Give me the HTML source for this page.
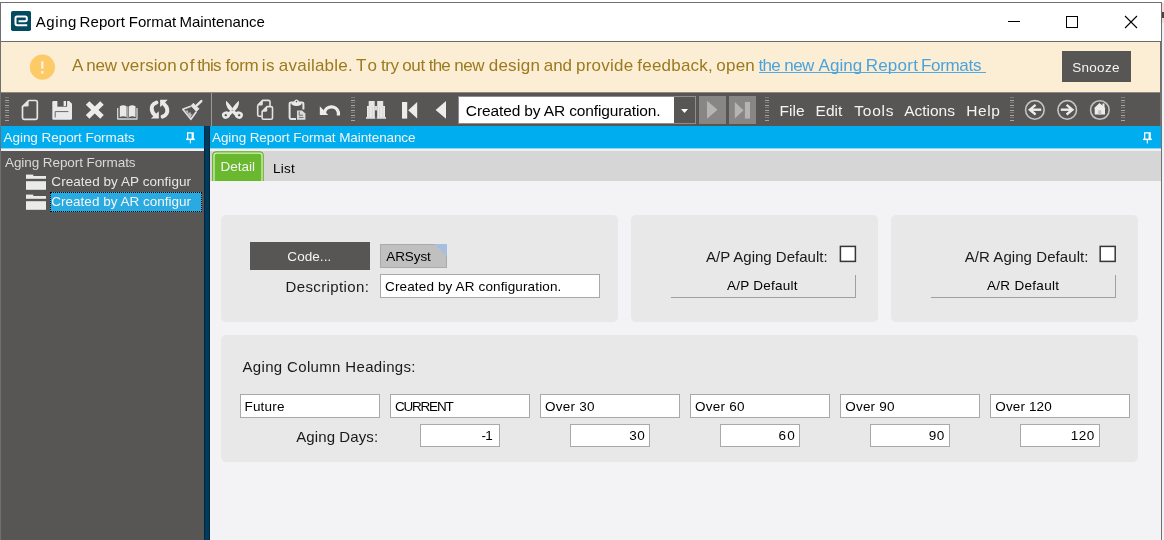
<!DOCTYPE html>
<html>
<head>
<meta charset="utf-8">
<title>Aging Report Format Maintenance</title>
<style>
*{box-sizing:border-box;margin:0;padding:0}
html,body{width:1164px;height:540px;overflow:hidden;background:#fff}
body{font-family:"Liberation Sans",sans-serif;font-size:13.5px;color:#000;position:relative}
#root{position:absolute;left:0;top:0;width:1164px;height:540px;will-change:transform;overflow:hidden}
.abs{position:absolute}
#win{position:absolute;left:0;top:2px;width:1162px;height:538px;border:1px solid #707070;border-bottom:none;background:#fff}
#deskR{position:absolute;left:1162px;top:3px;width:2px;height:537px;background:#eef2f8}
#tsep{position:absolute;left:1px;top:41px;width:1160px;height:1px;background:#6b6b6b}
#banner{position:absolute;left:1px;top:42px;width:1159px;height:50px;background:#fcedd5}
#snooze{position:absolute;left:1062px;top:51px;width:69px;height:31px;background:#575654}
#toolbar{position:absolute;left:1px;top:92px;width:1159px;height:34px;background:#575654}
.grip{position:absolute;top:97px;width:4px;height:25px;background:repeating-linear-gradient(to bottom,#7d7c7a 0,#7d7c7a 1.5px,transparent 1.5px,transparent 2.6px,#a6a5a3 2.6px,#a6a5a3 3.8px,transparent 3.8px,transparent 5px)}
#sidebar{position:absolute;left:1px;top:126px;width:203px;height:414px;background:#575654}
#sidehead{position:absolute;left:1px;top:126px;width:203px;height:22px;background:#00aeef}
#splitter{position:absolute;left:204px;top:126px;width:6px;height:414px;background:#003a5d;border-left:1px solid #05253b;border-right:1px solid #0a2437}
#mainhead{position:absolute;left:210px;top:126px;width:951px;height:22px;background:#00aeef}
#tabstrip{position:absolute;left:210px;top:151px;width:951px;height:30px;background:#d6d6d6}
.lightline{position:absolute;top:148px;height:3px;background:linear-gradient(to bottom,#8fd7f5 0,#8fd7f5 1px,#f4efef 1px,#f4efef 3px)}
#content{position:absolute;left:210px;top:181px;width:951px;height:359px;background:#f3f3f5}
.panel{position:absolute;background:#e8e8e8;border-radius:5px}
.field{position:absolute;background:#fff;border:1px solid #a9a9a9}
.flatbtn{position:absolute;border-right:1px solid #a0a0a0;border-bottom:1px solid #a0a0a0}
.t{position:absolute;line-height:20px;white-space:pre}
</style>
</head>
<body><div id="root">
<div id="deskR"></div>
<div class="abs" style="left:1162px;top:3px;width:2px;height:20px;background:#fbd6d6"></div>
<div class="abs" style="left:1162px;top:12px;width:2px;height:6px;background:#4a4242"></div>
<div id="win"></div>
<div id="tsep"></div>
<div id="banner"></div>
<div class="abs" style="left:758.8px;top:72px;width:227px;height:1px;background:#55a7dd"></div>
<div id="snooze"></div>
<div id="toolbar"></div>
<div class="abs" style="left:1160px;top:42px;width:1px;height:84px;background:#707070"></div>
<div class="abs" style="left:1px;top:92px;width:1159px;height:1px;background:#8d8883"></div>
<div id="sidebar"></div>
<div id="sidehead"></div>
<div id="splitter"></div>
<div id="mainhead"></div>
<div id="tabstrip"></div>
<div class="lightline" style="left:1px;width:203px"></div>
<div class="lightline" style="left:210px;width:951px"></div>
<div id="content"></div>
<div class="grip" style="left:5px"></div>
<div class="grip" style="left:351px"></div>
<div class="grip" style="left:765px"></div>
<div class="grip" style="left:1010px"></div>
<div class="grip" style="left:1121px"></div>
<div class="abs" style="left:211px;top:93px;width:1px;height:33px;background:#9a9997"></div>
<div class="abs" style="left:458px;top:96px;width:238px;height:28px;background:#fff;border:1px solid #8f8e8c"></div>
<div class="abs" style="left:674px;top:97px;width:21px;height:26px;background:#575654"></div>
<svg class="abs" style="left:681px;top:109px" width="7" height="4"><path d="M0 0H7L3.5 4Z" fill="#fff"/></svg>
<div class="abs" style="left:699px;top:96px;width:27px;height:28px;background:#878685"></div>
<div class="abs" style="left:729px;top:96px;width:27px;height:28px;background:#878685"></div>
<div class="abs" style="left:50px;top:192px;width:152px;height:20px;background:#29abe2;border:1px dotted #000"></div>
<svg class="abs" style="left:210px;top:150px" width="60" height="31" viewBox="210 150 60 31" fill="none">
<path d="M212.5 181V155Q212.5 151.7 216 151.7H260Q263.3 151.7 263.3 155V181Z" fill="#69b82d" stroke="#69b82d" stroke-width="1"/>
<path d="M214 181V155.6Q214 153.2 216.6 153.2H259.4Q262 153.2 262 155.6V181" stroke="#d6eec3" stroke-width="1.3"/>
</svg>
<div class="panel" style="left:221px;top:215px;width:397px;height:107px"></div>
<div class="panel" style="left:631px;top:215px;width:247px;height:107px"></div>
<div class="panel" style="left:891px;top:215px;width:247px;height:107px"></div>
<div class="panel" style="left:221px;top:335px;width:917px;height:127px"></div>
<div class="abs" style="left:250px;top:242px;width:120px;height:28px;background:#575654"></div>
<div class="field" style="left:380px;top:244px;width:67px;height:24px;background:#c0c0c0;border-color:#aaa"></div>
<svg class="abs" style="left:434px;top:244px" width="13" height="12"><path d="M0 0H13V12Z" fill="#a6bfdf"/></svg>
<div class="field" style="left:380px;top:274px;width:220px;height:24px"></div>
<div class="flatbtn" style="left:671px;top:275px;width:185px;height:23px"></div>
<div class="flatbtn" style="left:931px;top:275px;width:185px;height:23px"></div>
<div class="field" style="left:240px;top:394px;width:140px;height:24px"></div>
<div class="field" style="left:390px;top:394px;width:140px;height:24px"></div>
<div class="field" style="left:540px;top:394px;width:140px;height:24px"></div>
<div class="field" style="left:690px;top:394px;width:140px;height:24px"></div>
<div class="field" style="left:840px;top:394px;width:140px;height:24px"></div>
<div class="field" style="left:990px;top:394px;width:140px;height:24px"></div>
<div class="field" style="left:420px;top:424px;width:80px;height:23px"></div>
<div class="field" style="left:570px;top:424px;width:80px;height:23px"></div>
<div class="field" style="left:720px;top:424px;width:80px;height:23px"></div>
<div class="field" style="left:870px;top:424px;width:80px;height:23px"></div>
<div class="field" style="left:1020px;top:424px;width:80px;height:23px"></div>
<!-- ICONS overlay (absolute coords) -->
<svg class="abs" style="left:0;top:0" width="1164" height="540" viewBox="0 0 1164 540" fill="none">
<!-- app icon -->
<rect x="11" y="11" width="20" height="20" rx="1.8" fill="#024a60"/>
<path d="M18.6 21.2H25.2Q26.8 21.2 26.8 19.6V18.1Q26.8 16.5 25.2 16.5H17.1Q15.5 16.5 15.5 18.1V23.6Q15.5 25.2 17.1 25.2H27.2" stroke="#fff" stroke-width="2" stroke-linejoin="round"/>
<!-- window controls -->
<path d="M1008 21.5H1020" stroke="#000" stroke-width="1"/>
<rect x="1066.5" y="16.5" width="11" height="11" stroke="#000" stroke-width="1"/>
<path d="M1125 16L1137 28M1137 16L1125 28" stroke="#000" stroke-width="1.1"/>
<!-- banner warn -->
<circle cx="42.4" cy="67.1" r="12.6" fill="#fdca68"/>
<rect x="41" y="61.2" width="2.6" height="7.4" fill="#fdeed4"/>
<rect x="41" y="71.1" width="2.6" height="2.5" fill="#fdeed4"/>
<g id="tb" stroke-linejoin="round" stroke-linecap="butt">
<!-- new -->
<path d="M28.6 100.5H35.8Q37.3 100.5 37.3 102V117.8Q37.3 119.3 35.8 119.3H24Q22.5 119.3 22.5 117.8V106.6Z" stroke="#e4e4e4" stroke-width="1.7"/>
<path d="M28.6 100.5V105.2Q28.6 106.6 27.2 106.6H22.5Z" fill="#e4e4e4"/>
<!-- save -->
<path d="M53.5 101H69.2L72 103.8V118.6Q72 119.8 70.8 119.8H53.5Q52.3 119.8 52.3 118.6V102.2Q52.3 101 53.5 101Z" fill="#e9e9e9"/>
<rect x="57.4" y="100.5" width="9.7" height="6.2" fill="#575654"/>
<rect x="63.6" y="101" width="2.4" height="5" fill="#e9e9e9"/>
<path d="M55.2 117.5V111.6H68.4" stroke="#6a6968" stroke-width="1"/>
<!-- delete X -->
<path d="M87.6 103L102 116.8M102 103L87.6 116.8" stroke="#ececec" stroke-width="5.1"/>
<!-- book -->
<path d="M119.8 117V106.2Q123 104.5 126.6 106.2V117Q123 115.6 119.8 117Z" fill="#e9e9e9"/>
<path d="M129 117V106.2Q132.3 104.5 135.5 106.2V117Q132.3 115.6 129 117Z" fill="#e9e9e9"/>
<path d="M117.7 108V119H137V108" stroke="#d8d8d8" stroke-width="1.3"/>
<path d="M127.8 106.5V119" stroke="#a5a5a5" stroke-width="1.6"/>
<!-- refresh -->
<path d="M156.4 102.6C152.6 103.6 151.3 107 151.8 110C152.2 112 153.2 113.6 154.8 115" stroke="#e9e9e9" stroke-width="4" stroke-linecap="round"/>
<path d="M150.9 118.6H158.8V111.2Z" fill="#e9e9e9"/>
<path d="M162.6 116.6C166.4 115.6 167.7 112.2 167.2 109.2C166.8 107.2 165.8 105.6 164.2 104.2" stroke="#e9e9e9" stroke-width="4" stroke-linecap="round"/>
<path d="M167.7 99.8H160.1V107.2Z" fill="#e9e9e9"/>
<!-- broom -->
<path d="M201.3 101.1L196.8 105.4" stroke="#e6e6e6" stroke-width="2.4" stroke-linecap="round"/>
<path d="M193.4 103.2L199 108.8L196.5 111.5L191 105.8Z" fill="#e6e6e6" stroke="#e6e6e6" stroke-width=".8" stroke-linejoin="round"/>
<path d="M190.8 106.2L182.8 109.3L190.9 119.3L196.3 111.8" stroke="#e2e2e2" stroke-width="1.7"/>
<path d="M185.4 110.6L190.6 117.6L192.6 113.6L190.8 114.8L190.4 111.8L188.6 113.4L187.8 110.4Z" fill="#c4c4c4"/>
<!-- scissors -->
<path d="M226 101Q225.4 104.6 227.2 107.6Q228.6 109.8 230.6 111.2L236.2 117L238.8 114.2L233.4 109.8Q231.8 106.4 226.4 101Z" fill="#e9e9e9"/>
<path d="M238.9 101Q239.5 104.6 237.7 107.6Q236.3 109.8 234.3 111.2L228.7 117L226.1 114.2L231.5 109.8Q233.1 106.4 238.5 101Z" fill="#e9e9e9"/>
<ellipse cx="225.9" cy="115.1" rx="2.7" ry="2.4" stroke="#e9e9e9" stroke-width="2.5" transform="rotate(-20 225.9 115.1)"/>
<ellipse cx="239" cy="115.1" rx="2.7" ry="2.4" stroke="#e9e9e9" stroke-width="2.5" transform="rotate(20 239 115.1)"/>
<rect x="231.4" y="109.8" width="2" height="1" fill="#a0a0a0"/>
<!-- copy -->
<path d="M257.7 105.3L262.6 100.4H268.6Q270 100.4 270 101.8V106" stroke="#e4e4e4" stroke-width="1.6"/>
<path d="M257.7 105.3V114.8Q257.7 116.2 259.1 116.2H261.6" stroke="#e4e4e4" stroke-width="1.6"/>
<path d="M262.8 100.4V104Q262.8 105.5 261.4 105.5H257.7Z" fill="#e4e4e4"/>
<path d="M267 106.6H271Q272.5 106.6 272.5 108V117.8Q272.5 119.2 271 119.2H263.5Q262.1 119.2 262.1 117.8V111.5Z" stroke="#e4e4e4" stroke-width="1.6"/>
<path d="M267.2 106.6V110.2Q267.2 111.7 265.8 111.7H262.1Z" fill="#e4e4e4"/>
<!-- paste -->
<path d="M296 119H291Q289.6 119 289.6 117.6V103.4Q289.6 102.4 291 102.4H302Q303.4 102.4 303.4 103.4V109.5" stroke="#e4e4e4" stroke-width="2"/>
<path d="M291.6 102.4Q294.5 102 294.8 100.2Q296.5 99 298.2 100.2Q298.5 102 301.4 102.4V104.4Q296.5 107.4 291.6 104.4Z" fill="#e9e9e9"/>
<circle cx="296.5" cy="101.6" r=".8" fill="#575654"/>
<path d="M297 110.4H302L305.4 113.6V119.8H297Z" fill="#dcdcdc"/>
<path d="M299.2 111.5V115.2H303M298.8 117.4H303.5" stroke="#6f6e6d" stroke-width="1"/>
<!-- undo -->
<path d="M324.4 113.2A7.1 7.1 0 0 1 338.4 112.4V115.6" stroke="#ececec" stroke-width="3.3"/>
<path d="M319.8 106.2V114.9H328.2Z" fill="#ececec"/>
<!-- binoculars -->
<rect x="368.7" y="101" width="6" height="5" fill="#e6e6e6"/><rect x="377.2" y="101" width="6" height="5" fill="#e6e6e6"/>
<rect x="367" y="106" width="7.8" height="11.2" fill="#e9e9e9"/><rect x="377.2" y="106" width="7.8" height="11.2" fill="#e9e9e9"/>
<rect x="366" y="117" width="9.2" height="1.8" fill="#dcdcdc"/><rect x="376.8" y="117" width="9.2" height="1.8" fill="#dcdcdc"/>
<rect x="374.8" y="106" width="2.4" height="4.4" fill="#dadada"/>
<path d="M369.2 106.5V117M372.4 106.5V117M379.6 106.5V117M382.8 106.5V117" stroke="#cfcfcf" stroke-width=".8"/>
<!-- first / prev -->
<rect x="402" y="102" width="5.2" height="16.6" fill="#ececec"/>
<path d="M408.2 110.3L417.2 102V118.6Z" fill="#ececec"/>
<path d="M435.6 109.9L446 101V118.8Z" fill="#ececec"/>
<!-- next / last (disabled) -->
<path d="M707 100.8L717.6 109.8L707 118.8Z" fill="#b5b3b3"/>
<path d="M734.8 102L743.6 110.3L734.8 118.6Z" fill="#b5b3b3"/>
<rect x="744.9" y="102" width="5.1" height="16.6" fill="#b5b3b3"/>
<!-- nav circles -->
<circle cx="1034.85" cy="109.95" r="9.3" stroke="#c4c4c4" stroke-width="1.6"/>
<path d="M1041.2 109.7H1030" stroke="#ececec" stroke-width="2.4"/>
<path d="M1035.6 104.9L1029.8 109.7L1035.6 114.5" stroke="#ececec" stroke-width="2.3" stroke-linejoin="miter"/>
<path d="M1029 109.7L1033 106.8V112.6Z" fill="#ececec"/>
<circle cx="1067.2" cy="109.95" r="9.3" stroke="#c4c4c4" stroke-width="1.6"/>
<path d="M1060.8 109.7H1072" stroke="#ececec" stroke-width="2.4"/>
<path d="M1066.6 104.9L1072.4 109.7L1066.6 114.5" stroke="#ececec" stroke-width="2.3" stroke-linejoin="miter"/>
<path d="M1073.2 109.7L1069.2 106.8V112.6Z" fill="#ececec"/>
<circle cx="1099.85" cy="110" r="9.3" stroke="#c4c4c4" stroke-width="1.6"/>
<path d="M1093.9 108.2L1099.5 103.1L1105.6 108.2H1105V114.6H1094.7V108.2Z" fill="#ececec"/>
<rect x="1102.4" y="103.5" width="2.1" height="4" fill="#ececec"/>
<rect x="1098.1" y="110.3" width="3.2" height="4.3" fill="#c2c2c2"/>
</g>
<!-- checkboxes -->
<rect x="840.4" y="246.4" width="15" height="15" fill="#fff" stroke="#363636" stroke-width="1.5"/>
<rect x="1100.2" y="246.4" width="15" height="15" fill="#fff" stroke="#363636" stroke-width="1.5"/>
<!-- pins -->
<g fill="#fff">
<path d="M187 132.3H193.8V139H191.6V133.5H188.3V139H187Z"/><rect x="186" y="138.6" width="8.8" height="1.5"/><rect x="189.8" y="140" width="1.1" height="3.4"/>
<path d="M1144 132.3H1150.8V139H1148.6V133.5H1145.3V139H1144Z"/><rect x="1143" y="138.6" width="8.8" height="1.5"/><rect x="1146.8" y="140" width="1.1" height="3.4"/>
</g>
<!-- folders -->
<g fill="#eaeaea">
<rect x="26" y="174.6" width="7.3" height="2"/><rect x="26" y="176" width="20" height="2.8"/><rect x="26" y="181.2" width="20" height="8.6"/>
<rect x="26" y="194.6" width="7.3" height="2"/><rect x="26" y="196" width="20" height="2.8"/><rect x="26" y="201.2" width="20" height="8.6"/>
</g>
</svg>
<span class="t" style="left:35.77px;top:12px;font-size:15px;letter-spacing:0.567px;color:#000">Aging</span>
<span class="t" style="left:79.60px;top:12px;font-size:15px;letter-spacing:0.067px;color:#000">Report</span>
<span class="t" style="left:128.83px;top:12px;font-size:15px;letter-spacing:-0.033px;color:#000">Format</span>
<span class="t" style="left:179.57px;top:12px;font-size:15px;letter-spacing:-0.057px;color:#000">Maintenance</span>
<span class="t" style="left:72.00px;top:56px;font-size:17px;letter-spacing:0.000px;color:#9c7a1e">A</span>
<span class="t" style="left:86.33px;top:56px;font-size:17px;letter-spacing:-0.250px;color:#9c7a1e">new</span>
<span class="t" style="left:121.27px;top:56px;font-size:17px;letter-spacing:0.089px;color:#9c7a1e">version</span>
<span class="t" style="left:179.33px;top:56px;font-size:17px;letter-spacing:1.000px;color:#9c7a1e">of</span>
<span class="t" style="left:197.33px;top:56px;font-size:17px;letter-spacing:-0.789px;color:#9c7a1e">this</span>
<span class="t" style="left:225.60px;top:56px;font-size:17px;letter-spacing:-0.322px;color:#9c7a1e">form</span>
<span class="t" style="left:261.83px;top:56px;font-size:17px;letter-spacing:0.300px;color:#9c7a1e">is</span>
<span class="t" style="left:278.83px;top:56px;font-size:17px;letter-spacing:0.226px;color:#9c7a1e">available.</span>
<span class="t" style="left:355.93px;top:56px;font-size:17px;letter-spacing:3.167px;color:#9c7a1e">To</span>
<span class="t" style="left:381.10px;top:56px;font-size:17px;letter-spacing:-0.483px;color:#9c7a1e">try</span>
<span class="t" style="left:402.33px;top:56px;font-size:17px;letter-spacing:-0.417px;color:#9c7a1e">out</span>
<span class="t" style="left:428.83px;top:56px;font-size:17px;letter-spacing:-0.833px;color:#9c7a1e">the</span>
<span class="t" style="left:454.33px;top:56px;font-size:17px;letter-spacing:-0.500px;color:#9c7a1e">new</span>
<span class="t" style="left:488.83px;top:56px;font-size:17px;letter-spacing:0.193px;color:#9c7a1e">design</span>
<span class="t" style="left:543.83px;top:56px;font-size:17px;letter-spacing:-0.083px;color:#9c7a1e">and</span>
<span class="t" style="left:576.00px;top:56px;font-size:17px;letter-spacing:0.250px;color:#9c7a1e">provide</span>
<span class="t" style="left:637.33px;top:56px;font-size:17px;letter-spacing:0.213px;color:#9c7a1e">feedback,</span>
<span class="t" style="left:716.33px;top:56px;font-size:17px;letter-spacing:0.211px;color:#9c7a1e">open</span>
<span class="t" style="left:758.60px;top:56px;font-size:17px;letter-spacing:-0.733px;color:#4aa3dc">the</span>
<span class="t" style="left:784.33px;top:56px;font-size:17px;letter-spacing:-0.600px;color:#4aa3dc">new</span>
<span class="t" style="left:818.57px;top:56px;font-size:17px;letter-spacing:0.017px;color:#4aa3dc">Aging</span>
<span class="t" style="left:865.67px;top:56px;font-size:17px;letter-spacing:0.240px;color:#4aa3dc">Report</span>
<span class="t" style="left:920.93px;top:56px;font-size:17px;letter-spacing:-0.306px;color:#4aa3dc">Formats</span>
<span class="t" style="left:1072.30px;top:58px;font-size:13.5px;letter-spacing:0.267px;color:#f4f4f4">Snooze</span>
<span class="t" style="left:779.40px;top:101px;font-size:15.5px;letter-spacing:0.100px;color:#f4f4f4">File</span>
<span class="t" style="left:815.60px;top:101px;font-size:15.5px;letter-spacing:0.000px;color:#f4f4f4">Edit</span>
<span class="t" style="left:854.37px;top:101px;font-size:15.5px;letter-spacing:0.725px;color:#f4f4f4">Tools</span>
<span class="t" style="left:904.30px;top:101px;font-size:15.5px;letter-spacing:-0.028px;color:#f4f4f4">Actions</span>
<span class="t" style="left:966.37px;top:101px;font-size:15.5px;letter-spacing:0.533px;color:#f4f4f4">Help</span>
<span class="t" style="left:465.87px;top:101px;font-size:15.5px;letter-spacing:-0.126px;color:#000">Created by AR configuration.</span>
<span class="t" style="left:3.53px;top:128px;font-size:13.5px;letter-spacing:-0.047px;color:#f4f4f4">Aging Report Formats</span>
<span class="t" style="left:212.00px;top:128px;font-size:13.5px;letter-spacing:-0.094px;color:#f4f4f4">Aging Report Format Maintenance</span>
<span class="t" style="left:5.00px;top:153px;font-size:13.5px;letter-spacing:-0.079px;color:#d9d9d9">Aging Report Formats</span>
<span class="t" style="left:51.33px;top:172px;font-size:13.5px;letter-spacing:0.054px;color:#e6e6e6">Created by AP configur</span>
<span class="t" style="left:51.33px;top:192px;font-size:13.5px;letter-spacing:0.006px;color:#f4f4f4">Created by AR configur</span>
<span class="t" style="left:220.50px;top:157px;font-size:13.5px;letter-spacing:0.007px;color:#f4f4f4">Detail</span>
<span class="t" style="left:273.07px;top:159px;font-size:13.5px;letter-spacing:0.256px;color:#000">List</span>
<span class="t" style="left:287.33px;top:247px;font-size:13.5px;letter-spacing:0.056px;color:#f4f4f4">Code...</span>
<span class="t" style="left:386.23px;top:247px;font-size:13.5px;letter-spacing:-0.080px;color:#000">ARSyst</span>
<span class="t" style="left:285.57px;top:277px;font-size:15px;letter-spacing:0.376px;color:#1a1a1a">Description:</span>
<span class="t" style="left:385.07px;top:277px;font-size:13.5px;letter-spacing:0.135px;color:#000">Created by AR configuration.</span>
<span class="t" style="left:706.00px;top:247px;font-size:15px;letter-spacing:0.008px;color:#1a1a1a">A/P Aging Default:</span>
<span class="t" style="left:727.00px;top:276px;font-size:13.5px;letter-spacing:0.250px;color:#000">A/P Default</span>
<span class="t" style="left:964.73px;top:247px;font-size:15px;letter-spacing:0.067px;color:#1a1a1a">A/R Aging Default:</span>
<span class="t" style="left:987.00px;top:276px;font-size:13.5px;letter-spacing:0.300px;color:#000">A/R Default</span>
<span class="t" style="left:242.50px;top:357px;font-size:15px;letter-spacing:0.338px;color:#1a1a1a">Aging Column Headings:</span>
<span class="t" style="left:244.53px;top:397px;font-size:13.5px;letter-spacing:0.173px;color:#000">Future</span>
<span class="t" style="left:395.03px;top:397px;font-size:13.5px;letter-spacing:-1.228px;color:#000">CURRENT</span>
<span class="t" style="left:545.07px;top:397px;font-size:13.5px;letter-spacing:0.244px;color:#000">Over 30</span>
<span class="t" style="left:695.07px;top:397px;font-size:13.5px;letter-spacing:0.244px;color:#000">Over 60</span>
<span class="t" style="left:845.27px;top:397px;font-size:13.5px;letter-spacing:0.200px;color:#000">Over 90</span>
<span class="t" style="left:995.27px;top:397px;font-size:13.5px;letter-spacing:0.129px;color:#000">Over 120</span>
<span class="t" style="left:296.23px;top:427px;font-size:15px;letter-spacing:0.100px;color:#1a1a1a">Aging Days:</span>
<span class="t" style="left:481.50px;top:426px;font-size:13.5px;letter-spacing:-0.833px;color:#000">-1</span>
<span class="t" style="left:629.23px;top:426px;font-size:13.5px;letter-spacing:0.600px;color:#000">30</span>
<span class="t" style="left:778.60px;top:426px;font-size:13.5px;letter-spacing:1.167px;color:#000">60</span>
<span class="t" style="left:928.77px;top:426px;font-size:13.5px;letter-spacing:0.400px;color:#000">90</span>
<span class="t" style="left:1070.77px;top:426px;font-size:13.5px;letter-spacing:0.450px;color:#000">120</span>
</div>
</body>
</html>
